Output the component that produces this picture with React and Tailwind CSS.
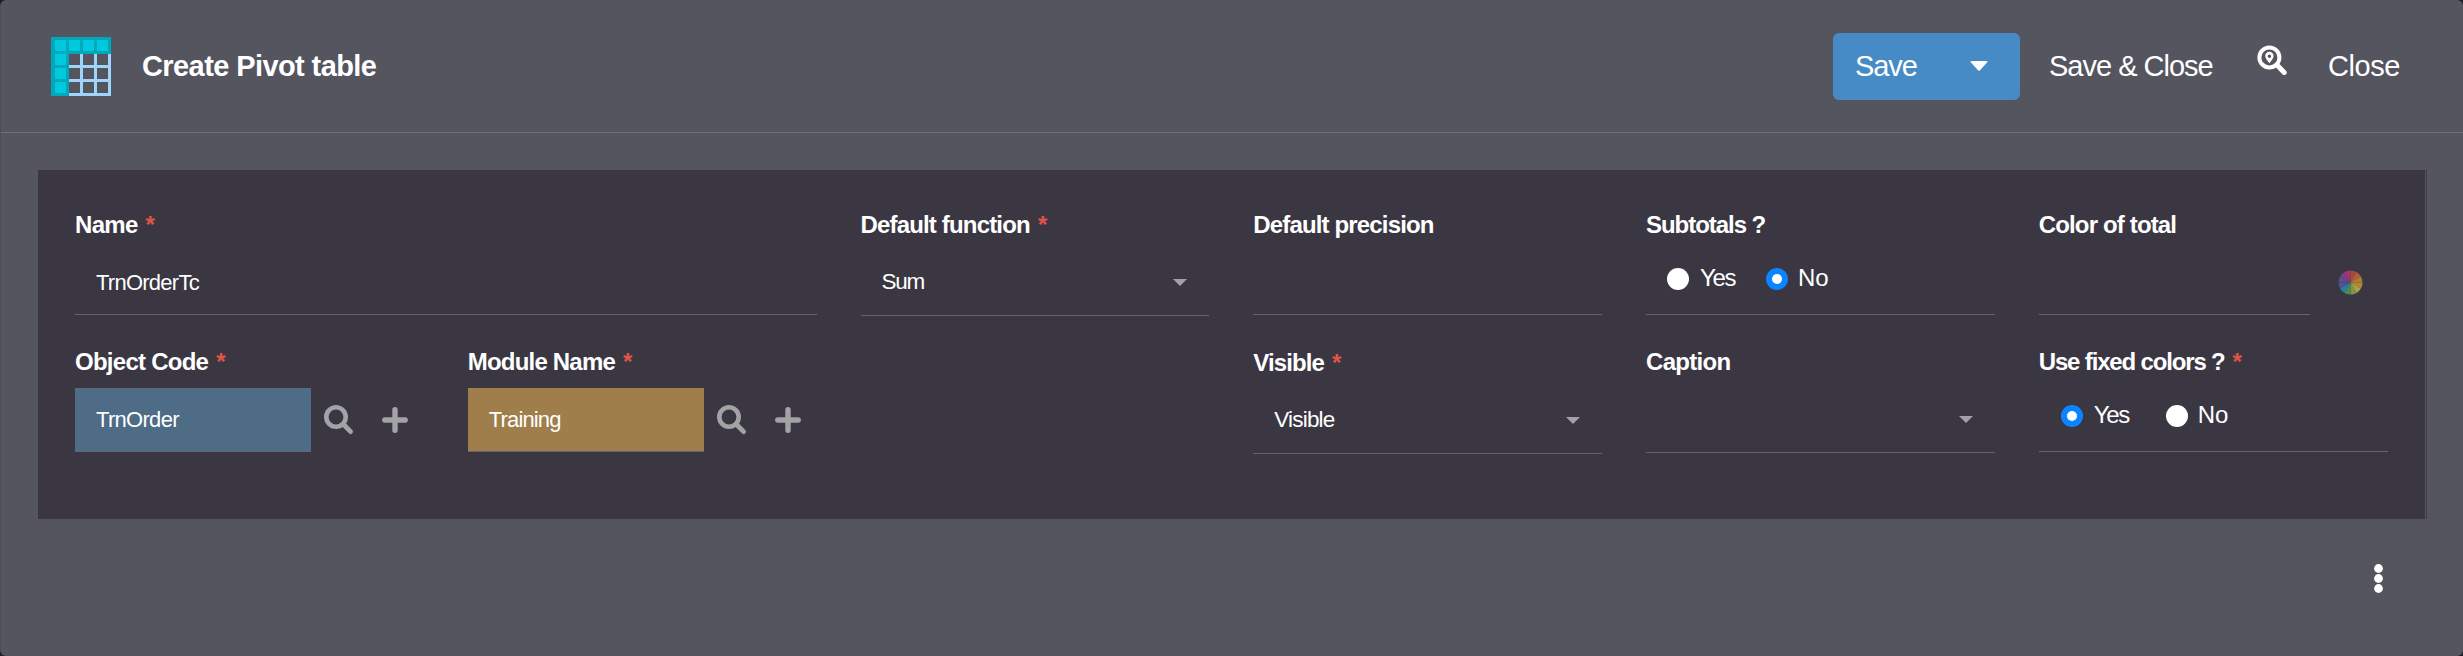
import React from "react";

function PivotIcon() {
  const header = [[3, 3], [17, 3], [31, 3], [45, 3], [3, 17], [3, 31], [3, 45]];
  return (
    <svg width="60" height="59" viewBox="0 0 60 59" shapeRendering="crispEdges" className="mt-px block shrink-0">
      <path d="M17 16H60V59H17Z" fill="#9fd4fb" />
      {[18, 32, 46].map((x) =>
        [17, 31, 45].map((y) => (
          <rect key={x + "-" + y} x={x} y={y} width="11" height="11" fill="#555560" />
        ))
      )}
      <path d="M0 0H60V17H18V59H0Z" fill="#00a9ba" />
      {header.map(([x, y]) => (
        <rect key={x + "-" + y} x={x + 1} y={y} width="11" height="11" fill="#00c8de" />
      ))}
    </svg>
  );
}

function LocateIcon() {
  return (
    <svg width="30" height="31" viewBox="0 0 30 31" className="block" fill="none">
      <circle cx="12.4" cy="12.4" r="10" stroke="#fff" strokeWidth="4" />
      <path d="M20 20L27.2 27.4" stroke="#fff" strokeWidth="5" strokeLinecap="round" />
      <path
        fillRule="evenodd"
        d="M12.4 6.8a4.2 4.2 0 0 1 4.2 4.2c0 2.3-2.6 5-4.2 7.3-1.6-2.3-4.2-5-4.2-7.3a4.2 4.2 0 0 1 4.2-4.2zM12.4 9.5a1.7 1.7 0 1 0 0 3.400a1.7 1.7 0 1 0 0-3.400z"
        fill="#fff"
      />
    </svg>
  );
}

function SearchIcon() {
  return (
    <svg width="30" height="30" viewBox="0 0 30 30" className="block" fill="none">
      <circle cx="12" cy="12" r="9.7" stroke="#a3a3a5" strokeWidth="4.6" />
      <path d="M19.8 19.8L26.6 26.6" stroke="#a3a3a5" strokeWidth="4.8" strokeLinecap="round" />
    </svg>
  );
}

function PlusIcon() {
  return (
    <svg width="26" height="26" viewBox="0 0 26 26" className="block" fill="none">
      <path d="M13 2.8V23.2M2.8 13H23.2" stroke="#a3a3a5" strokeWidth="5.4" strokeLinecap="round" />
    </svg>
  );
}

function Caret({ className }) {
  return (
    <svg width="14" height="7" viewBox="0 0 14 7" className={"block " + className}>
      <path d="M0 0H14L7 7Z" fill="currentColor" />
    </svg>
  );
}

function ColorWheel() {
  const colors = [
    "#a94a3e", "#b0603c", "#b07c35", "#b08a30", "#aea047", "#869150",
    "#4f8a51", "#2c7fa0", "#4d5590", "#5d4b8c", "#7d3f88", "#a33862",
  ];
  const point = (k) => {
    const a = (k * Math.PI) / 6;
    return (12.5 + 12 * Math.sin(a)).toFixed(2) + " " + (12.5 - 12 * Math.cos(a)).toFixed(2);
  };
  return (
    <svg width="25" height="25" viewBox="0 0 25 25" className="block">
      {colors.map((c, k) => (
        <path key={c} d={`M12.5 12.5L${point(k)}A12 12 0 0 1 ${point(k + 1)}Z`} fill={c} />
      ))}
    </svg>
  );
}

function Field({ label, tracking, required, className = "", children }) {
  return (
    <div className={"flex min-w-0 flex-col " + className}>
      <div className="flex h-[30px] items-start text-[24px] leading-[30px] font-bold whitespace-nowrap">
        <span className={tracking}>{label}</span>
        {required && <span className="ml-[8px] text-[#e05548]">*</span>}
      </div>
      <div className="mt-[11px] flex">{children}</div>
    </div>
  );
}

function Input({ value, tracking = "", className = "w-full" }) {
  return (
    <div className={"flex h-16 items-center border-b border-[#65636f] pl-[21px] text-[22px] leading-[26px] " + className}>
      <span className={tracking}>{value}</span>
    </div>
  );
}

function Select({ value = "", tracking = "", className = "h-[65px] pb-[3px]" }) {
  return (
    <div className={"flex w-full items-center justify-between border-b border-[#65636f] pr-[22px] pl-[21px] text-[22.5px] leading-[26px] " + className}>
      <span className={tracking}>{value}</span>
      <Caret className="mt-px text-[#a3a1a5]" />
    </div>
  );
}

function Radio({ label, checked, tracking = "", className = "" }) {
  return (
    <div className={"flex items-center " + className}>
      {checked ? (
        <span className="flex size-[22px] items-center justify-center rounded-full bg-[#0a85ff]">
          <span className="size-[10px] rounded-full bg-white" />
        </span>
      ) : (
        <span className="size-[22px] rounded-full bg-white" />
      )}
      <span className={"mb-[3px] text-[24px] leading-[30px] " + tracking}>{label}</span>
    </div>
  );
}

function Reference({ value, tracking, className }) {
  return (
    <>
      <Input value={value} tracking={tracking} className={"w-[236px] shrink-0 " + className} />
      <div className="ml-[13px] flex h-[63px] items-center">
        <SearchIcon />
        <div className="ml-[28px]">
          <PlusIcon />
        </div>
      </div>
    </>
  );
}

export default function App() {
  return (
    <div className="h-[656px] w-[2463px] overflow-hidden bg-[#1f1c27] font-['Liberation_Sans',Arial,sans-serif] text-white">
      <div className="flex h-full flex-col overflow-hidden rounded-[6px] border-l border-[#4d4d58] bg-[#555560]">
        <header className="flex h-[133px] shrink-0 items-center border-b border-[#6f6d77] pl-[50px]">
          <PivotIcon />
          <h1 className="ml-[31px] text-[29px] leading-[34px] font-bold tracking-[-0.59px]">Create Pivot table</h1>
          <div className="ml-auto flex h-[67px] w-[187px] items-center rounded-[6px] bg-[#478bc6] pl-[22px]">
            <span className="w-[115px] text-[29px] leading-[34px] tracking-[-1.1px]">Save</span>
            <svg width="18" height="10" viewBox="0 0 18 10" className="block">
              <path d="M1.5 0H16.5Q18 .3 17 1.6L10 9.2Q9 10.2 8 9.2L1 1.6Q0 .3 1.5 0Z" fill="#fff" />
            </svg>
          </div>
          <span className="ml-[29px] w-[208px] text-[29px] leading-[34px] tracking-[-1px]">Save &amp; Close</span>
          <div className="mb-[12px] w-[71px]">
            <LocateIcon />
          </div>
          <span className="w-[135px] text-[29px] leading-[34px] tracking-[-0.45px]">Close</span>
        </header>

        <main className="mt-[37px] ml-[37px] h-[349px] w-[2389px] shrink-0 border-r border-[#3f3c48]">
          <div className="mr-px grid h-full grid-cols-6 content-start gap-x-[44px] gap-y-[31px] bg-[#3a3742] pt-[40px] pr-[37.5px] pl-[37px]">
            <Field label="Name" tracking="tracking-[-0.7px]" required className="col-span-2 h-[106px]">
              <Input value="TrnOrderTc" tracking="tracking-[-0.75px]" />
            </Field>
            <Field label="Default function" tracking="tracking-[-0.83px]" required className="h-[106px]">
              <Select value="Sum" tracking="tracking-[-1.3px]" />
            </Field>
            <Field label="Default precision" tracking="tracking-[-0.84px]" className="h-[106px]">
              <Input />
            </Field>
            <Field label="Subtotals ?" tracking="tracking-[-1.04px]" className="h-[106px]">
              <div className="flex h-16 w-full border-b border-[#65636f] pb-[7px] pl-[21px]">
                <Radio label="Yes" tracking="ml-[11px] w-[65px] tracking-[-1.3px]" />
                <Radio label="No" checked tracking="ml-[10px]" className="ml-px" />
              </div>
            </Field>
            <Field label="Color of total" tracking="tracking-[-0.85px]" className="h-[106px]">
              <Input className="w-[271px]" />
              <div className="ml-[28px] flex h-[63px] items-center">
                <ColorWheel />
              </div>
            </Field>

            <Field label="Object Code" tracking="tracking-[-0.74px]" required>
              <Reference value="TrnOrder" tracking="tracking-[-0.7px]" className="bg-[#4e6c86]" />
            </Field>
            <Field label="Module Name" tracking="tracking-[-0.8px]" required>
              <Reference value="Training" tracking="tracking-[-0.85px]" className="bg-[#9f7e4b]" />
            </Field>
            <Field label="Visible" tracking="tracking-[-0.88px]" required className="col-start-4 pt-px">
              <Select value="Visible" tracking="tracking-[-0.8px]" className="h-[65px] pb-[2px]" />
            </Field>
            <Field label="Caption" tracking="tracking-[-0.7px]">
              <Select />
            </Field>
            <Field label="Use fixed colors ?" tracking="tracking-[-1.16px]" required>
              <div className="flex h-16 w-full border-b border-[#65636f] pb-[7px] pl-[22px]">
                <Radio label="Yes" checked tracking="ml-[11px] w-[72px] tracking-[-1.3px]" />
                <Radio label="No" tracking="ml-[10px]" />
              </div>
            </Field>
          </div>
        </main>

        <footer className="flex flex-col items-end pt-[45px] pr-[80px]">
          <svg width="9" height="30" viewBox="0 0 9 30" className="block">
            <circle cx="4.5" cy="4.5" r="4.4" fill="#fff" />
            <circle cx="4.5" cy="14.5" r="4.4" fill="#fff" />
            <circle cx="4.5" cy="24.5" r="4.4" fill="#fff" />
          </svg>
        </footer>
      </div>
    </div>
  );
}
